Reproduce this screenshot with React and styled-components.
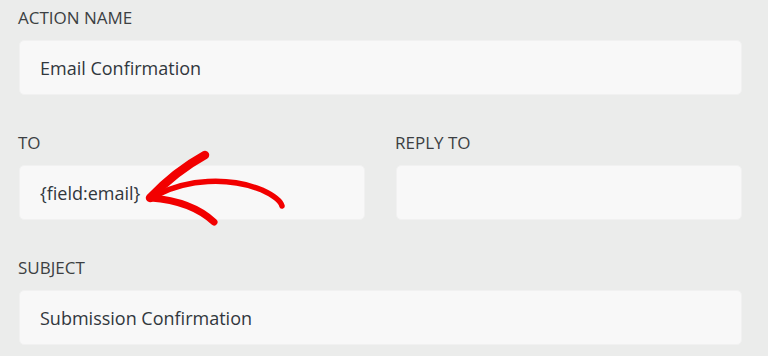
import styled, { createGlobalStyle } from 'styled-components'

const GlobalStyle = createGlobalStyle`
  html, body {
    margin: 0;
    padding: 0;
    background: #ebeceb;
    font-family: "Open Sans", "Noto Sans", sans-serif;
  }
`

const App = () => {
  return (
    <Page>
      <GlobalStyle />
      <Field>
        <Label>ACTION NAME</Label>
        <Input>Email Confirmation</Input>
      </Field>
      <Row>
        <Field>
          <Label>TO</Label>
          <InputWrap>
            <Input>{'{field:email}'}</Input>
            <Arrow viewBox="0 0 160 90" width="160" height="90">
              {/* shaft */}
              <path d="M12 44 C 40 30, 80 26, 115 40 C 128 46, 134 52, 135 56" />
              {/* upper barb */}
              <path d="M3 48 C 20 30, 38 16, 58 5" strokeWidth="8.5" />
              {/* lower barb */}
              <path d="M4 48 C 30 50, 52 58, 67 72" strokeWidth="7" />
            </Arrow>
          </InputWrap>
        </Field>
        <Field>
          <Label>REPLY TO</Label>
          <Input />
        </Field>
      </Row>
      <Field>
        <Label>SUBJECT</Label>
        <Input>Submission Confirmation</Input>
      </Field>
    </Page>
  )
}

export default App

const Page = styled.div`
  padding: 8px 26px 0 19px;
  display: flex;
  flex-direction: column;
  gap: 38px;
`

const Row = styled.div`
  display: grid;
  grid-template-columns: 1fr 1fr;
  column-gap: 31px;
`

const Field = styled.div`
  display: flex;
  flex-direction: column;
`

const Label = styled.div`
  font-size: 17px;
  line-height: 20px;
  color: #3c3f42;
  margin-bottom: 12px;
  margin-left: -1px;
`

const InputWrap = styled.div`
  position: relative;
`

const Input = styled.div`
  height: 55px;
  box-sizing: border-box;
  padding-left: 20px;
  display: flex;
  align-items: center;
  background: #f8f8f8;
  border: 1px solid #f1f1f1;
  border-radius: 5px;
  font-size: 18px;
  color: #31373d;
`

const Arrow = styled.svg`
  position: absolute;
  left: 128px;
  top: -15px;
  overflow: visible;
  fill: none;
  stroke: #f20000;
  stroke-width: 5.5px;
  stroke-linecap: round;
  stroke-linejoin: round;
`
